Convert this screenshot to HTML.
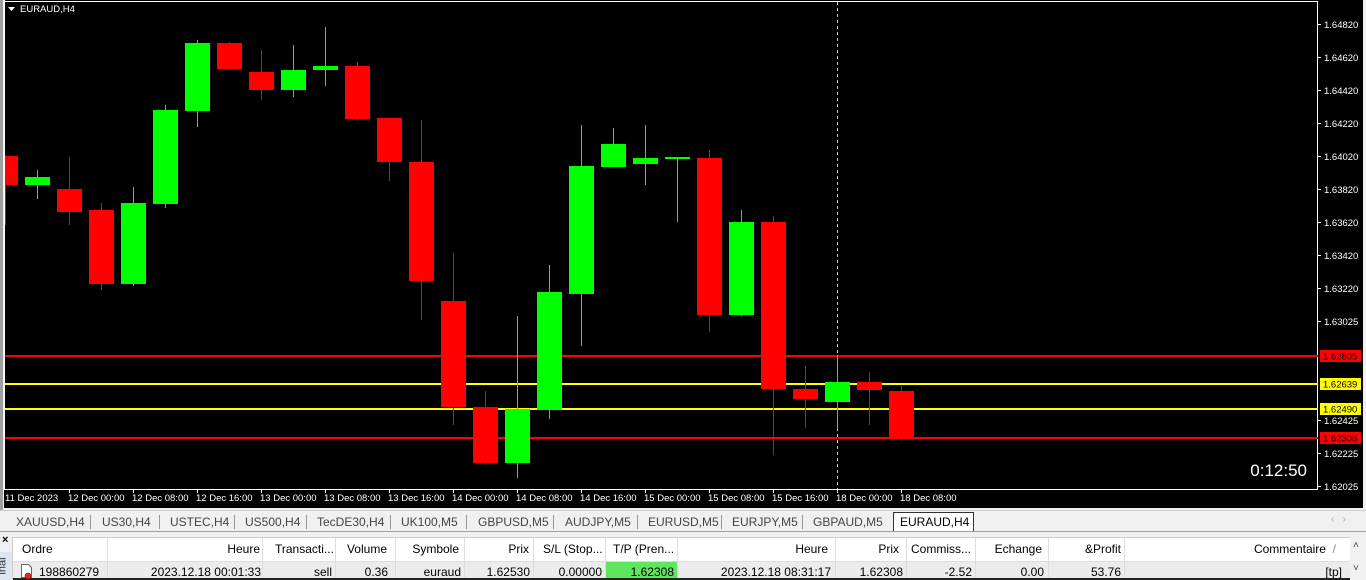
<!DOCTYPE html>
<html><head><meta charset="utf-8"><style>
*{margin:0;padding:0;box-sizing:border-box}
body{width:1366px;height:580px;overflow:hidden;background:#f0f0f0;font-family:"Liberation Sans",sans-serif;position:relative}
.t{position:absolute;font-size:12px;color:#000;white-space:nowrap}
</style></head><body>
<svg width="1366" height="510" style="position:absolute;left:0;top:0" font-family="Liberation Sans, sans-serif">
<rect x="0" y="0" width="1366" height="510" fill="#f0f0f0"/>
<rect x="0" y="0" width="3" height="510" fill="#a0a0a0"/>
<rect x="4" y="0" width="1359" height="508" fill="#000"/>
<line x1="4.5" y1="0" x2="4.5" y2="490" stroke="#fff"/>
<line x1="4" y1="1.5" x2="1318" y2="1.5" stroke="#fff"/>
<line x1="1317.5" y1="1" x2="1317.5" y2="490" stroke="#fff"/>
<line x1="4" y1="489.5" x2="1318" y2="489.5" stroke="#fff"/>
<path d="M8 7h7l-3.5 4z" fill="#fff"/>
<text x="20" y="12" fill="#fff" font-size="9.5">EURAUD,H4</text>
<line x1="837.5" y1="2" x2="837.5" y2="489" stroke="#ccc" stroke-dasharray="3,3"/>
<g font-size="9.5" fill="#fff">
<g stroke="#fff">
<line x1="1318" y1="24.5" x2="1321" y2="24.5"/><line x1="1318" y1="57.5" x2="1321" y2="57.5"/><line x1="1318" y1="90.5" x2="1321" y2="90.5"/><line x1="1318" y1="123.5" x2="1321" y2="123.5"/><line x1="1318" y1="156.5" x2="1321" y2="156.5"/><line x1="1318" y1="189.5" x2="1321" y2="189.5"/><line x1="1318" y1="222.5" x2="1321" y2="222.5"/><line x1="1318" y1="255.5" x2="1321" y2="255.5"/><line x1="1318" y1="288.5" x2="1321" y2="288.5"/><line x1="1318" y1="321.5" x2="1321" y2="321.5"/><line x1="1318" y1="420.5" x2="1321" y2="420.5"/><line x1="1318" y1="453.5" x2="1321" y2="453.5"/><line x1="1318" y1="486.5" x2="1321" y2="486.5"/>
</g>
<text x="1324" y="28">1.64820</text><text x="1324" y="61">1.64620</text><text x="1324" y="94">1.64420</text><text x="1324" y="127">1.64220</text><text x="1324" y="160">1.64020</text><text x="1324" y="193">1.63820</text><text x="1324" y="226">1.63620</text><text x="1324" y="259">1.63420</text><text x="1324" y="292">1.63220</text><text x="1324" y="325">1.63025</text><text x="1324" y="424">1.62425</text><text x="1324" y="457">1.62225</text><text x="1324" y="490">1.62025</text>
</g>
<g stroke-width="2">
<line x1="5" y1="356" x2="1318" y2="356" stroke="#f00"/>
<line x1="5" y1="384" x2="1318" y2="384" stroke="#ff0"/>
<line x1="5" y1="409" x2="1318" y2="409" stroke="#ff0"/>
<line x1="5" y1="438" x2="1318" y2="438" stroke="#f00"/>
</g>
<rect x="1320" y="350" width="41" height="12" fill="#f00"/><text x="1323" y="359.5" font-size="9.5" fill="#000">1.62805</text>
<rect x="1320" y="378" width="41" height="12" fill="#ff0"/><text x="1323" y="387.5" font-size="9.5" fill="#000">1.62639</text>
<rect x="1320" y="403" width="41" height="12" fill="#ff0"/><text x="1323" y="412.5" font-size="9.5" fill="#000">1.62490</text>
<rect x="1320" y="432" width="41" height="12" fill="#f00"/><text x="1323" y="441.5" font-size="9.5" fill="#000">1.62308</text>
<g id="c">
<!-- wicks -->
<g stroke-width="1">
<line x1="5.5" y1="155" x2="5.5" y2="225" stroke="#f00"/>
<line x1="37.5" y1="170" x2="37.5" y2="199" stroke="#0f0"/>
<line x1="69.5" y1="157" x2="69.5" y2="225" stroke="#f00"/>
<line x1="101.5" y1="203" x2="101.5" y2="290" stroke="#f00"/>
<line x1="133.5" y1="187" x2="133.5" y2="286" stroke="#0f0"/>
<line x1="165.5" y1="105" x2="165.5" y2="208" stroke="#0f0"/>
<line x1="197.5" y1="40" x2="197.5" y2="127" stroke="#0f0"/>
<line x1="229.5" y1="42" x2="229.5" y2="70" stroke="#f00"/>
<line x1="261.5" y1="50" x2="261.5" y2="100" stroke="#f00"/>
<line x1="293.5" y1="45" x2="293.5" y2="97" stroke="#0f0"/>
<line x1="325.5" y1="27" x2="325.5" y2="86" stroke="#0f0"/>
<line x1="357.5" y1="62" x2="357.5" y2="121" stroke="#f00"/>
<line x1="389.5" y1="118" x2="389.5" y2="181" stroke="#f00"/>
<line x1="421.5" y1="120" x2="421.5" y2="320" stroke="#f00"/>
<line x1="453.5" y1="253" x2="453.5" y2="425" stroke="#f00"/>
<line x1="485.5" y1="391" x2="485.5" y2="465" stroke="#f00"/>
<line x1="517.5" y1="316" x2="517.5" y2="478" stroke="#0f0"/>
<line x1="549.5" y1="265" x2="549.5" y2="419" stroke="#0f0"/>
<line x1="581.5" y1="125" x2="581.5" y2="346" stroke="#0f0"/>
<line x1="613.5" y1="128" x2="613.5" y2="167" stroke="#0f0"/>
<line x1="645.5" y1="125" x2="645.5" y2="185" stroke="#0f0"/>
<line x1="677.5" y1="158" x2="677.5" y2="222" stroke="#0f0"/>
<line x1="709.5" y1="150" x2="709.5" y2="332" stroke="#f00"/>
<line x1="741.5" y1="210" x2="741.5" y2="316" stroke="#0f0"/>
<line x1="773.5" y1="216" x2="773.5" y2="455" stroke="#f00"/>
<line x1="805.5" y1="366" x2="805.5" y2="428" stroke="#f00"/>
<line x1="837.5" y1="355" x2="837.5" y2="430" stroke="#0f0"/>
<line x1="869.5" y1="372" x2="869.5" y2="425" stroke="#f00"/>
<line x1="901.5" y1="386" x2="901.5" y2="441" stroke="#f00"/>
</g>
<rect x="5" y="156" width="13" height="29" fill="#f00"/>
<rect x="25" y="177" width="25" height="8" fill="#0f0"/>
<rect x="57" y="189" width="25" height="23" fill="#f00"/>
<rect x="89" y="210" width="25" height="74" fill="#f00"/>
<rect x="121" y="203" width="25" height="81" fill="#0f0"/>
<rect x="153" y="110" width="25" height="94" fill="#0f0"/>
<rect x="185" y="43" width="25" height="68" fill="#0f0"/>
<rect x="217" y="43" width="25" height="26" fill="#f00"/>
<rect x="249" y="72" width="25" height="18" fill="#f00"/>
<rect x="281" y="70" width="25" height="20" fill="#0f0"/>
<rect x="313" y="66" width="25" height="4" fill="#0f0"/>
<rect x="345" y="66" width="25" height="53" fill="#f00"/>
<rect x="377" y="118" width="25" height="44" fill="#f00"/>
<rect x="409" y="162" width="25" height="119" fill="#f00"/>
<rect x="441" y="301" width="25" height="106" fill="#f00"/>
<rect x="473" y="407" width="25" height="56" fill="#f00"/>
<rect x="505" y="409" width="25" height="54" fill="#0f0"/>
<rect x="537" y="292" width="25" height="118" fill="#0f0"/>
<rect x="569" y="166" width="25" height="128" fill="#0f0"/>
<rect x="601" y="144" width="25" height="23" fill="#0f0"/>
<rect x="633" y="158" width="25" height="6" fill="#0f0"/>
<rect x="665" y="157" width="25" height="2" fill="#0f0"/>
<rect x="697" y="158" width="25" height="157" fill="#f00"/>
<rect x="729" y="222" width="25" height="93" fill="#0f0"/>
<rect x="761" y="222" width="25" height="167" fill="#f00"/>
<rect x="793" y="389" width="25" height="10" fill="#f00"/>
<rect x="825" y="382" width="25" height="20" fill="#0f0"/>
<rect x="857" y="382" width="25" height="8" fill="#f00"/>
<rect x="889" y="391" width="25" height="47" fill="#f00"/>
</g>
<text x="1307" y="476" fill="#fff" font-size="17" text-anchor="end">0:12:50</text>
<g font-size="9.5" fill="#fff">
<text x="5" y="501">11 Dec 2023</text><text x="68" y="501">12 Dec 00:00</text><text x="132" y="501">12 Dec 08:00</text><text x="196" y="501">12 Dec 16:00</text><text x="260" y="501">13 Dec 00:00</text><text x="324" y="501">13 Dec 08:00</text><text x="388" y="501">13 Dec 16:00</text><text x="452" y="501">14 Dec 00:00</text><text x="516" y="501">14 Dec 08:00</text><text x="580" y="501">14 Dec 16:00</text><text x="644" y="501">15 Dec 00:00</text><text x="708" y="501">15 Dec 08:00</text><text x="772" y="501">15 Dec 16:00</text><text x="836" y="501">18 Dec 00:00</text><text x="900" y="501">18 Dec 08:00</text>
</g>
<g stroke="#fff"><line x1="69.5" y1="490" x2="69.5" y2="493"/><line x1="133.5" y1="490" x2="133.5" y2="493"/><line x1="197.5" y1="490" x2="197.5" y2="493"/><line x1="261.5" y1="490" x2="261.5" y2="493"/><line x1="325.5" y1="490" x2="325.5" y2="493"/><line x1="389.5" y1="490" x2="389.5" y2="493"/><line x1="453.5" y1="490" x2="453.5" y2="493"/><line x1="517.5" y1="490" x2="517.5" y2="493"/><line x1="581.5" y1="490" x2="581.5" y2="493"/><line x1="645.5" y1="490" x2="645.5" y2="493"/><line x1="709.5" y1="490" x2="709.5" y2="493"/><line x1="773.5" y1="490" x2="773.5" y2="493"/><line x1="837.5" y1="490" x2="837.5" y2="493"/><line x1="901.5" y1="490" x2="901.5" y2="493"/></g>
</svg>
<!-- tabs -->
<div style="position:absolute;left:0;top:510px;width:1366px;height:22px;background:#f0f0f0;border-top:1px solid #d0d0d0"></div>
<div style="position:absolute;left:893px;top:512px;width:81px;height:20px;background:#fff;border:1px solid #333;border-bottom:none"></div>
<div style="position:absolute;left:0;top:531px;width:1366px;height:1px;background:#a0a0a0"></div>
<div class="t" style="top:515px;left:16px;color:#444">XAUUSD,H4</div>
<div class="t" style="top:515px;left:102px;color:#444">US30,H4</div>
<div class="t" style="top:515px;left:170px;color:#444">USTEC,H4</div>
<div class="t" style="top:515px;left:245px;color:#444">US500,H4</div>
<div class="t" style="top:515px;left:317px;color:#444">TecDE30,H4</div>
<div class="t" style="top:515px;left:401px;color:#444">UK100,M5</div>
<div class="t" style="top:515px;left:478px;color:#444">GBPUSD,M5</div>
<div class="t" style="top:515px;left:565px;color:#444">AUDJPY,M5</div>
<div class="t" style="top:515px;left:648px;color:#444">EURUSD,M5</div>
<div class="t" style="top:515px;left:732px;color:#444">EURJPY,M5</div>
<div class="t" style="top:515px;left:813px;color:#444">GBPAUD,M5</div>
<div class="t" style="top:515px;left:900px">EURAUD,H4</div>
<div class="t" style="top:514px;left:1331px;color:#aaa;font-size:10px">‹ &nbsp; ›</div>
<div style="position:absolute;top:515px;left:0;width:900px;height:14px;pointer-events:none">
<span style="position:absolute;left:90px;top:0;width:1px;height:14px;background:#999"></span><span style="position:absolute;left:159px;top:0;width:1px;height:14px;background:#999"></span><span style="position:absolute;left:234px;top:0;width:1px;height:14px;background:#999"></span><span style="position:absolute;left:306px;top:0;width:1px;height:14px;background:#999"></span><span style="position:absolute;left:390px;top:0;width:1px;height:14px;background:#999"></span><span style="position:absolute;left:466px;top:0;width:1px;height:14px;background:#999"></span><span style="position:absolute;left:553px;top:0;width:1px;height:14px;background:#999"></span><span style="position:absolute;left:637px;top:0;width:1px;height:14px;background:#999"></span><span style="position:absolute;left:721px;top:0;width:1px;height:14px;background:#999"></span><span style="position:absolute;left:802px;top:0;width:1px;height:14px;background:#999"></span>
</div>
<!-- terminal -->
<div style="position:absolute;left:0;top:532px;width:13px;height:48px;background:#f0f0f0"></div>
<div class="t" style="left:2px;top:534px;font-size:11px;font-weight:bold">×</div>
<div style="position:absolute;left:0;top:552px;width:12px;height:28px;background:#dbe6f1"></div>
<div class="t" style="left:-6px;top:560px;transform:rotate(-90deg);font-size:11px;color:#333">inal</div>
<div style="position:absolute;left:12px;top:537px;width:1354px;height:43px;background:#fff;border-top:1px solid #ccc;border-left:1px solid #ccc"></div>
<div style="position:absolute;left:13px;top:562px;width:1337px;height:16px;background:#ececec"></div>
<div style="position:absolute;left:605px;top:562px;width:72px;height:16px;background:#5ee65e"></div>
<div style="position:absolute;left:13px;top:578px;width:1337px;height:2px;background:#222"></div>
<div style="position:absolute;left:1350px;top:537px;width:16px;height:43px;background:#f0f0f0"></div>
<div class="t" style="left:1353px;top:540px;font-size:10px;color:#444">˄</div>
<div class="t" style="left:1353px;top:563px;font-size:10px;color:#444">˅</div>
<div style="position:absolute;top:538px;left:0;width:1350px;height:40px">
<span style="position:absolute;left:107px;top:0;width:1px;height:40px;background:#ddd"></span><span style="position:absolute;left:262px;top:0;width:1px;height:40px;background:#ddd"></span><span style="position:absolute;left:335px;top:0;width:1px;height:40px;background:#ddd"></span><span style="position:absolute;left:395px;top:0;width:1px;height:40px;background:#ddd"></span><span style="position:absolute;left:464px;top:0;width:1px;height:40px;background:#ddd"></span><span style="position:absolute;left:533px;top:0;width:1px;height:40px;background:#ddd"></span><span style="position:absolute;left:605px;top:0;width:1px;height:40px;background:#ddd"></span><span style="position:absolute;left:677px;top:0;width:1px;height:40px;background:#ddd"></span><span style="position:absolute;left:835px;top:0;width:1px;height:40px;background:#ddd"></span><span style="position:absolute;left:906px;top:0;width:1px;height:40px;background:#ddd"></span><span style="position:absolute;left:975px;top:0;width:1px;height:40px;background:#ddd"></span><span style="position:absolute;left:1048px;top:0;width:1px;height:40px;background:#ddd"></span><span style="position:absolute;left:1124px;top:0;width:1px;height:40px;background:#ddd"></span>
<span style="position:absolute;left:13px;top:23px;width:1337px;height:1px;background:#ddd"></span>
</div>
<div class="t" style="left:22px;top:542px">Ordre</div>
<div class="t" style="right:1106px;top:542px">Heure</div>
<div class="t" style="left:275px;top:542px">Transacti...</div>
<div class="t" style="right:979px;top:542px">Volume</div>
<div class="t" style="right:907px;top:542px">Symbole</div>
<div class="t" style="right:837px;top:542px">Prix</div>
<div class="t" style="left:543px;top:542px">S/L (Stop...</div>
<div class="t" style="left:613px;top:542px">T/P (Pren...</div>
<div class="t" style="right:538px;top:542px">Heure</div>
<div class="t" style="right:467px;top:542px">Prix</div>
<div class="t" style="left:911px;top:542px">Commiss...</div>
<div class="t" style="right:324px;top:542px">Echange</div>
<div class="t" style="right:245px;top:542px">&amp;Profit</div>
<div class="t" style="right:30px;top:542px">Commentaire &nbsp;<span style="color:#888">/</span></div>
<svg style="position:absolute;left:19px;top:563px" width="16" height="17"><path d="M2.5 1.5h7l3 3v10h-10z" fill="#fff" stroke="#666"/><circle cx="9" cy="13" r="3" fill="#e03010" stroke="#900" stroke-width=".6"/></svg>
<div class="t" style="left:39px;top:565px">198860279</div>
<div class="t" style="right:1105px;top:565px">2023.12.18 00:01:33</div>
<div class="t" style="right:1034px;top:565px">sell</div>
<div class="t" style="right:978px;top:565px">0.36</div>
<div class="t" style="right:905px;top:565px">euraud</div>
<div class="t" style="right:836px;top:565px">1.62530</div>
<div class="t" style="right:764px;top:565px">0.00000</div>
<div class="t" style="right:692px;top:565px">1.62308</div>
<div class="t" style="right:535px;top:565px">2023.12.18 08:31:17</div>
<div class="t" style="right:463px;top:565px">1.62308</div>
<div class="t" style="right:394px;top:565px">-2.52</div>
<div class="t" style="right:322px;top:565px">0.00</div>
<div class="t" style="right:245px;top:565px">53.76</div>
<div class="t" style="right:24px;top:565px">[tp]</div>
</body></html>
